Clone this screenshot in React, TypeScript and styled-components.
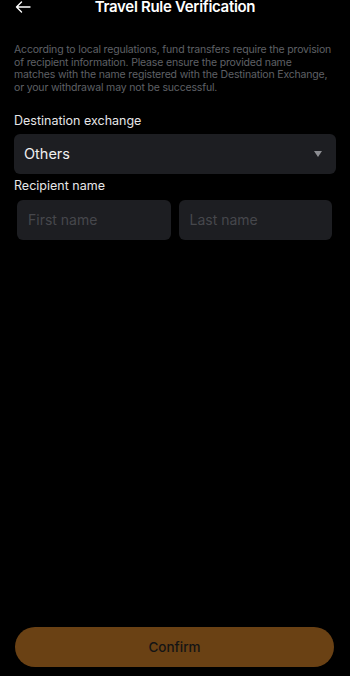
import React from "react";
import styled, { createGlobalStyle } from "styled-components";

const Global = createGlobalStyle`
  html, body { margin: 0; padding: 0; background: #000; }
  body { font-family: Inter, "Noto Sans", sans-serif; }
  * { box-sizing: border-box; }
`;

const Page = styled.div`
  width: 350px;
  height: 676px;
  background: #000;
  display: flex;
  flex-direction: column;
  overflow: hidden;
`;

const Header = styled.header`
  height: 14px;
  display: flex;
  align-items: center;
  justify-content: center;
  position: relative;
`;

const BackButton = styled.button`
  position: absolute;
  left: 14px;
  top: 0px;
  background: none;
  border: none;
  padding: 0;
  width: 18px;
  height: 13px;
  display: flex;
  align-items: center;
  justify-content: center;
`;

const Title = styled.h1`
  margin: 0;
  font-size: 15px;
  font-weight: 600;
  color: #fff;
  line-height: 18px;
  letter-spacing: -0.3px;
`;

const Content = styled.main`
  flex: 1;
  display: flex;
  flex-direction: column;
  padding: 30px 14px 0 14px;
`;

const Notice = styled.p`
  margin: 0;
  padding-right: 2px;
  font-size: 10.5px;
  line-height: 12.7px;
  color: #5f6066;
  letter-spacing: -0.17px;
`;

const Label = styled.div<{ $top: number }>`
  margin-top: ${(p) => p.$top}px;
  font-size: 12.5px;
  line-height: 16px;
  color: #e6e6e8;
`;

const Select = styled.div`
  margin-top: 5px;
  height: 40px;
  border-radius: 6px;
  background: #1d1e22;
  display: flex;
  align-items: center;
  justify-content: space-between;
  padding: 0 14px 0 10px;
  font-size: 14.5px;
  color: #f0f0f0;
`;

const Caret = styled.span`
  width: 0;
  height: 0;
  border-left: 4.5px solid transparent;
  border-right: 4.5px solid transparent;
  border-top: 6px solid #8c8d92;
`;

const NameRow = styled.div`
  margin-top: 6px;
  padding: 0 4px 0 3px;
  display: grid;
  grid-template-columns: 1fr 1fr;
  gap: 8px;
`;

const Input = styled.input`
  height: 40px;
  border-radius: 6px;
  border: none;
  outline: none;
  background: #1d1e22;
  padding: 0 11px;
  font-family: inherit;
  font-size: 14px;
  color: #fff;
  min-width: 0;
  &::placeholder { color: #46474c; }
`;

const Footer = styled.footer`
  padding: 0 16px 9px 15px;
`;

const Confirm = styled.button`
  width: 100%;
  height: 40px;
  border-radius: 20px;
  border: none;
  background: #6a4114;
  color: #141414;
  font-family: inherit;
  font-size: 13.5px;
  font-weight: 500;
`;

export default function App() {
  return (
    <>
      <Global />
      <Page>
        <Header>
          <BackButton aria-label="Back">
            <svg width="16" height="12" viewBox="0 0 16 12" fill="none">
              <path d="M15 6H1.5M6.5 1L1.5 6l5 5" stroke="#fff" strokeWidth="1.4" strokeLinecap="round" strokeLinejoin="round" />
            </svg>
          </BackButton>
          <Title>Travel Rule Verification</Title>
        </Header>
        <Content>
          <Notice>
            According to local regulations, fund transfers require the provision of recipient information. Please ensure the provided name matches with the name registered with the Destination Exchange, or your withdrawal may not be successful.
          </Notice>
          <Label $top={18}>Destination exchange</Label>
          <Select>
            <span>Others</span>
            <Caret />
          </Select>
          <Label $top={4}>Recipient name</Label>
          <NameRow>
            <Input placeholder="First name" />
            <Input placeholder="Last name" />
          </NameRow>
        </Content>
        <Footer>
          <Confirm>Confirm</Confirm>
        </Footer>
      </Page>
    </>
  );
}
